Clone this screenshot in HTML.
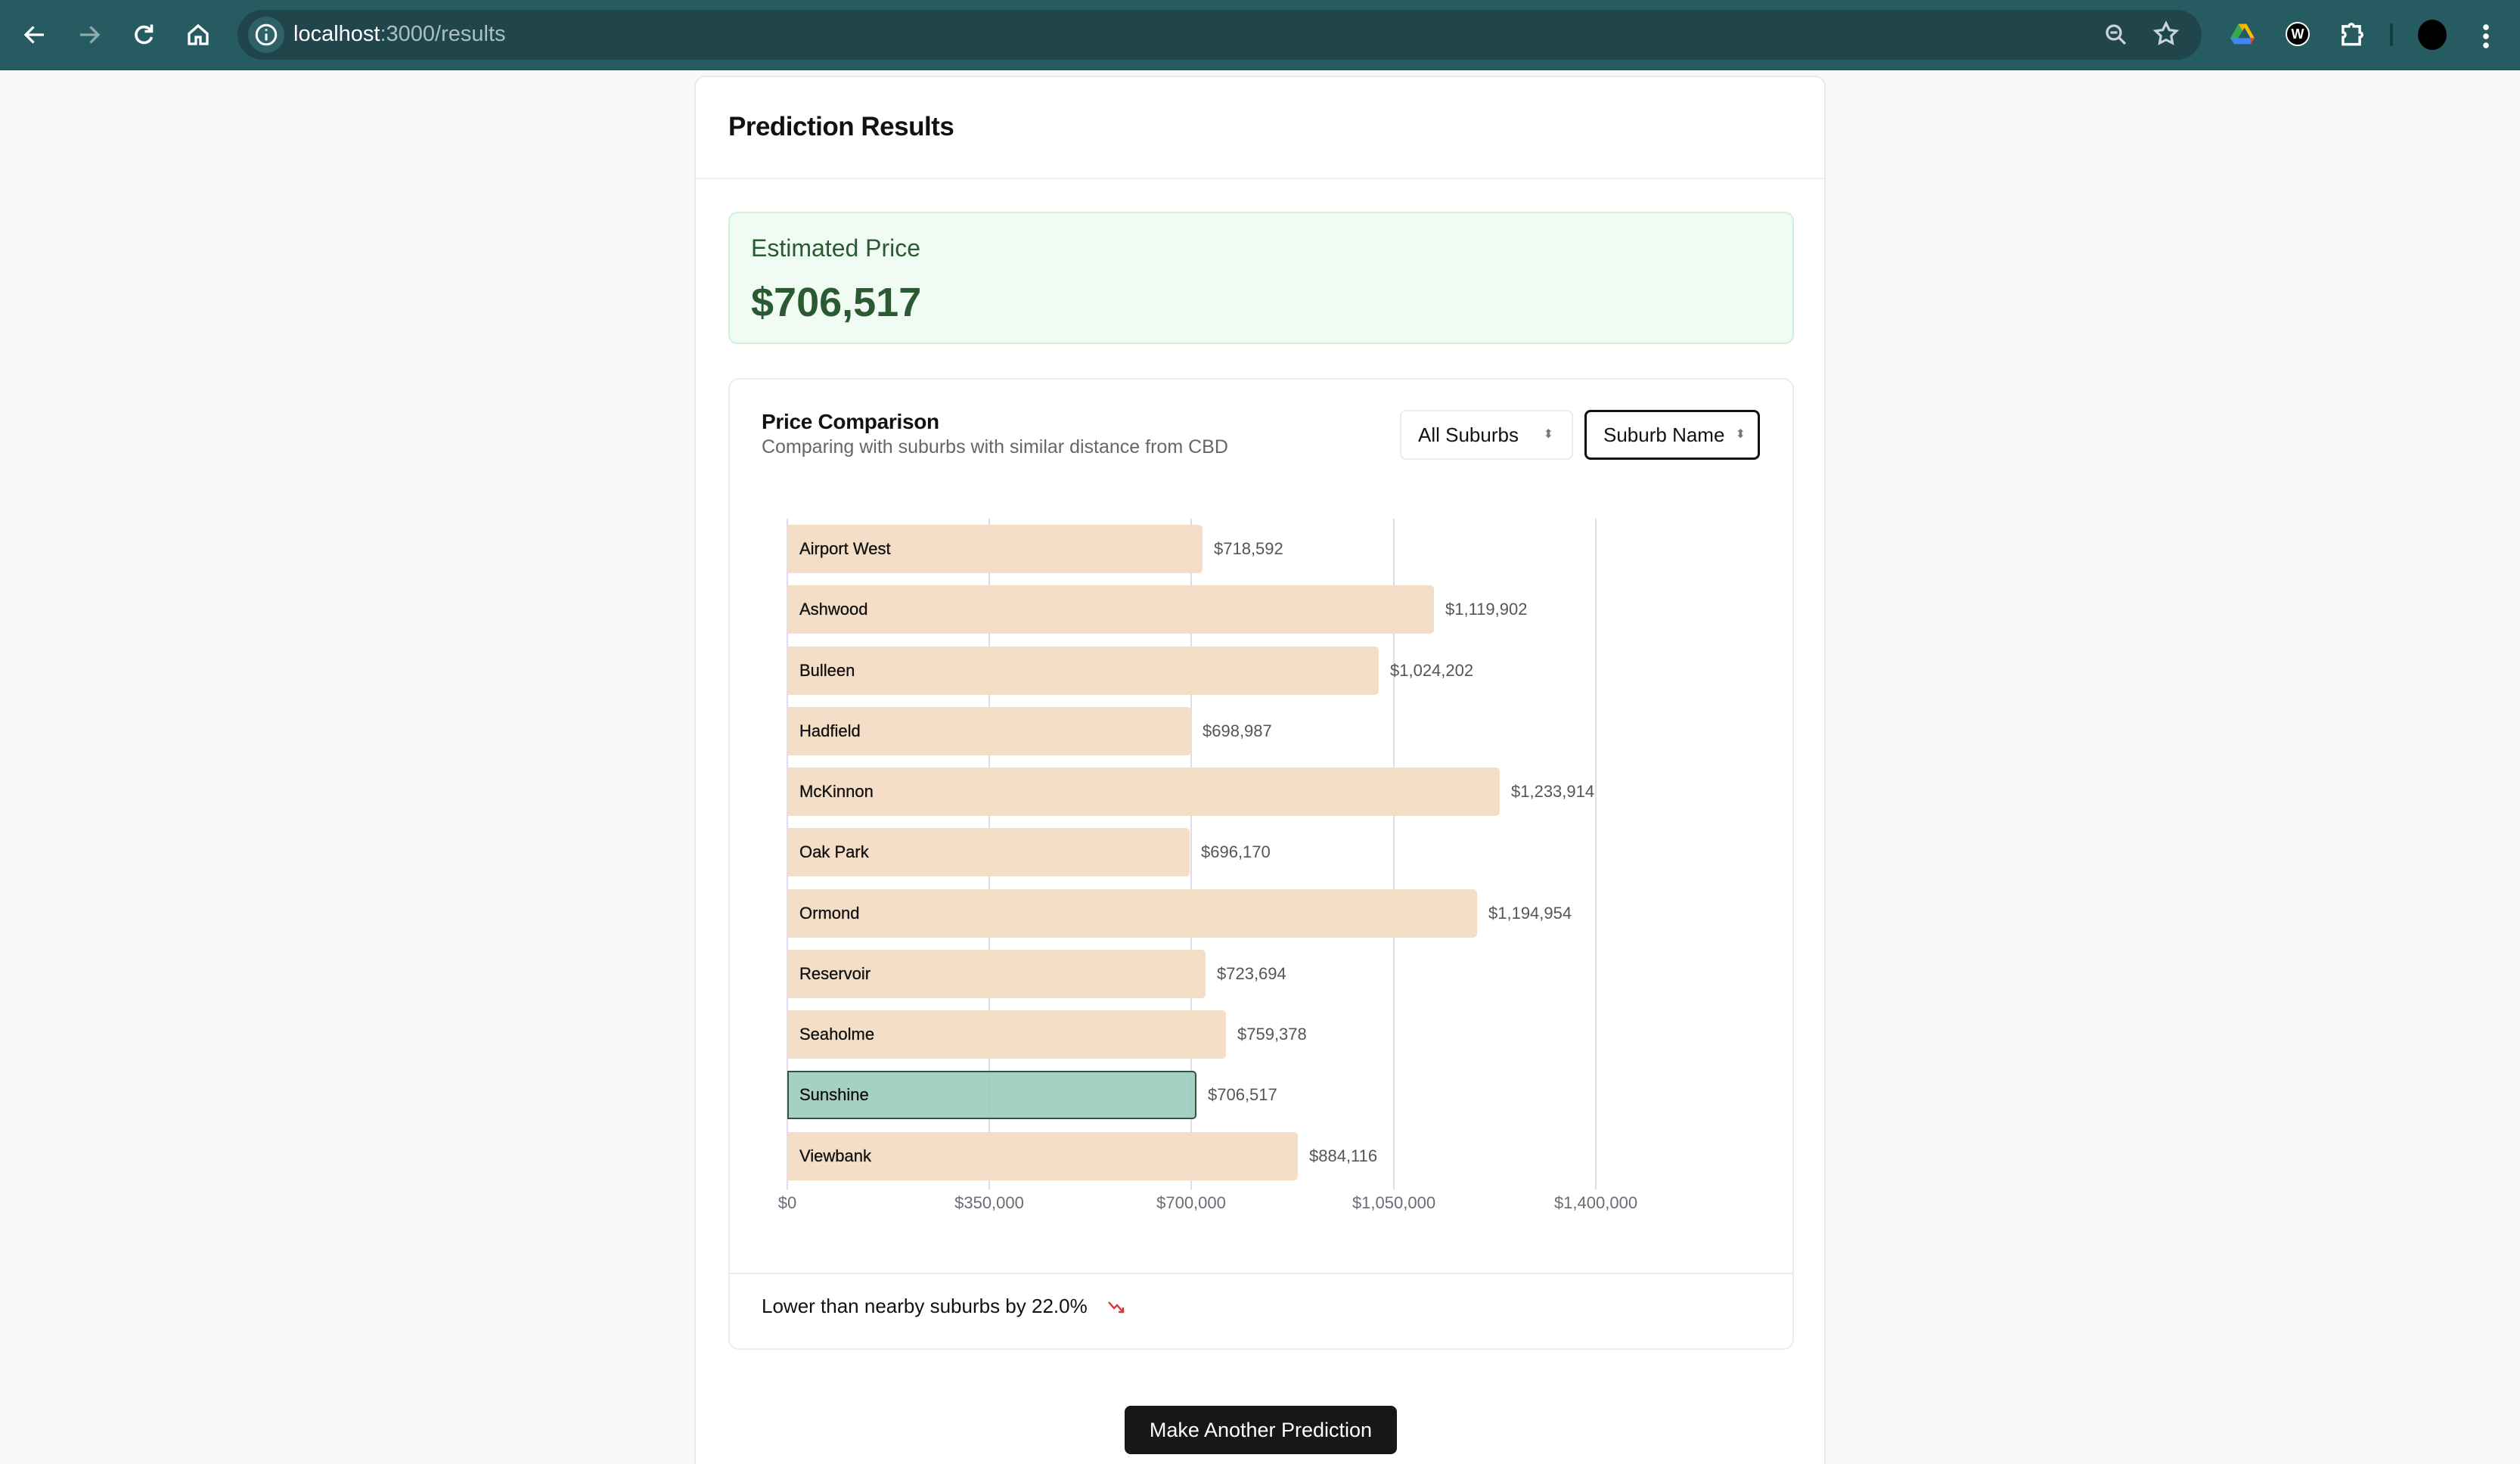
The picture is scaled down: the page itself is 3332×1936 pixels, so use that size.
<!DOCTYPE html>
<html style="width:3332px;height:1936px;overflow:hidden"><head><style>
*{margin:0;padding:0;box-sizing:border-box}
body{width:3332px;height:1936px;background:#f8f9fb;font-family:"Liberation Sans",sans-serif;position:relative;overflow:hidden}
.a{position:absolute}
.top{left:0;top:0;width:3332px;height:93px;background:#265b62}
.pill{left:314px;top:13px;width:2597px;height:66px;border-radius:33px;background:#20464c}
.card{left:918px;top:100px;width:1496px;height:1860px;background:#fff;border:2px solid #e8e9ec;border-radius:14px}
.bar{height:64px;background:#f4dec7;border-radius:0 5px 5px 0}
.lbl{font-size:22px;color:#111;line-height:64px;padding-left:16px;white-space:nowrap;-webkit-text-stroke:0.3px #111}
.val{font-size:22px;color:#555;line-height:64px}
.grid{top:686px;width:2px;height:887px;background:#dedcec}
.ax{top:1578px;font-size:22px;color:#6b6b75;transform:translateX(-50%)}
</style></head><body>
<div class="a top"></div>
<div class="a pill"></div>
<svg class="a" style="left:28px;top:28px" width="36" height="36" viewBox="0 0 24 24" fill="none" stroke="#fff" stroke-width="2.2"><path d="M20 12H5M11 5l-7 7 7 7"/></svg>
<svg class="a" style="left:100px;top:28px" width="36" height="36" viewBox="0 0 24 24" fill="none" stroke="#8fa9ac" stroke-width="2.2"><path d="M4 12h15M13 5l7 7-7 7"/></svg>
<svg class="a" style="left:172px;top:28px" width="36" height="36" viewBox="0 0 24 24" fill="none" stroke="#fff" stroke-width="2.4"><path d="M18 8a7 7 0 1 0 1 6"/><path d="M19 3v6h-6"/></svg>
<svg class="a" style="left:244px;top:28px" width="36" height="36" viewBox="0 0 24 24" fill="none" stroke="#fff" stroke-width="2.2"><path d="M4 11l8-7 8 7v9h-6v-6h-4v6H4z"/></svg>
<div class="a" style="left:328px;top:22px;width:48px;height:48px;border-radius:24px;background:#2f6168"></div>
<svg class="a" style="left:334px;top:28px" width="36" height="36" viewBox="0 0 24 24" fill="none" stroke="#fff" stroke-width="2"><circle cx="12" cy="12" r="8.5"/><path d="M12 11v6M12 7v1.5"/></svg>
<div class="a" style="left:388px;top:29px;font-size:29px;color:#fff">localhost<span style="color:#a9bfc1">:3000/results</span></div>
<svg class="a" style="left:2780px;top:28px" width="36" height="36" viewBox="0 0 24 24" fill="none" stroke="#c7d3d4" stroke-width="2.2"><circle cx="10" cy="10" r="6"/><path d="M7 10h6M14.5 14.5L20 20"/></svg>
<svg class="a" style="left:2845px;top:26px" width="38" height="38" viewBox="0 0 24 24" fill="none" stroke="#c7d3d4" stroke-width="2"><path d="M12 3l2.7 5.6 6 .8-4.4 4.2 1.1 6L12 16.8 6.6 19.6l1.1-6L3.3 9.4l6-.8z"/></svg>
<svg class="a" style="left:2949px;top:30px" width="32" height="30" viewBox="0 0 24 22"><path d="M8 1h8l-4 7z" fill="#f4b400"/><path d="M8 1L0 15l4 6 8-13z" fill="#34a853"/><path d="M16 1l8 14-4 0-8-14z" fill="#fbbc04"/><path d="M4 21h16l4-6H0z" fill="#4285f4"/><path d="M20 21l4-6h-4z" fill="#ea4335"/></svg>
<div class="a" style="left:3022px;top:29px;width:32px;height:32px;border-radius:16px;background:#000;border:2px solid #fff;color:#fff;font-size:18px;font-weight:bold;text-align:center;line-height:28px">W</div>
<svg class="a" style="left:3090px;top:27px" width="38" height="38" viewBox="0 0 24 24" fill="none" stroke="#fff" stroke-width="2.2"><path d="M5 5h5a2 2 0 0 1 4 0h5v5a2 2 0 0 1 0 4v6H5v-6a2 2 0 0 0 0-4z"/></svg>
<div class="a" style="left:3160px;top:31px;width:4px;height:30px;background:#173c40;border-radius:2px"></div>
<div class="a" style="left:3197px;top:26px;width:38px;height:40px;border-radius:50%;background:#000"></div>
<div class="a" style="left:3283px;top:30px;width:8px;height:34px;background:radial-gradient(circle,#fff 3.5px,transparent 4px) 0 0/8px 12px repeat-y"></div>

<div class="a card"></div>
<div class="a" style="left:963px;top:148px;font-size:35px;font-weight:bold;color:#111;letter-spacing:-0.5px">Prediction Results</div>
<div class="a" style="left:920px;top:235px;width:1492px;height:2px;background:#f0f1f3"></div>
<div class="a" style="left:963px;top:280px;width:1409px;height:175px;background:#f0fcf3;border:2px solid #cdf2d8;border-radius:12px"></div>
<div class="a" style="left:993px;top:310px;font-size:32px;color:#2b5a32">Estimated Price</div>
<div class="a" style="left:993px;top:369px;font-size:54px;font-weight:bold;color:#2b5a32">$706,517</div>

<div class="a" style="left:963px;top:500px;width:1409px;height:1285px;background:#fff;border:2px solid #ebecef;border-radius:14px"></div>
<div class="a" style="left:1007px;top:542px;font-size:28px;font-weight:bold;color:#111;letter-spacing:-0.3px">Price Comparison</div>
<div class="a" style="left:1007px;top:577px;font-size:25px;color:#666">Comparing with suburbs with similar distance from CBD</div>
<div class="a" style="left:1851px;top:542px;width:229px;height:66px;border:2px solid #ebecef;border-radius:8px;font-size:26px;line-height:62px;padding-left:22px;color:#111">All Suburbs<span style="position:absolute;right:24px;font-size:16px;color:#777">⬍</span></div>
<div class="a" style="left:2095px;top:542px;width:232px;height:66px;border:3px solid #111;border-radius:8px;font-size:26px;line-height:60px;padding-left:22px;color:#111">Suburb Name<span style="position:absolute;right:16px;font-size:16px;color:#777">⬍</span></div>

<div class="a grid" style="left:1040px"></div>
<div class="a grid" style="left:1307px"></div>
<div class="a grid" style="left:1574px"></div>
<div class="a grid" style="left:1842px"></div>
<div class="a grid" style="left:2109px"></div>

<div class="a bar" style="left:1041px;top:694px;width:549px"></div><div class="a lbl" style="left:1041px;top:694px">Airport West</div><div class="a val" style="left:1605px;top:694px">$718,592</div>
<div class="a bar" style="left:1041px;top:774px;width:855px"></div><div class="a lbl" style="left:1041px;top:774px">Ashwood</div><div class="a val" style="left:1911px;top:774px">$1,119,902</div>
<div class="a bar" style="left:1041px;top:855px;width:782px"></div><div class="a lbl" style="left:1041px;top:855px">Bulleen</div><div class="a val" style="left:1838px;top:855px">$1,024,202</div>
<div class="a bar" style="left:1041px;top:935px;width:534px"></div><div class="a lbl" style="left:1041px;top:935px">Hadfield</div><div class="a val" style="left:1590px;top:935px">$698,987</div>
<div class="a bar" style="left:1041px;top:1015px;width:942px"></div><div class="a lbl" style="left:1041px;top:1015px">McKinnon</div><div class="a val" style="left:1998px;top:1015px">$1,233,914</div>
<div class="a bar" style="left:1041px;top:1095px;width:532px"></div><div class="a lbl" style="left:1041px;top:1095px">Oak Park</div><div class="a val" style="left:1588px;top:1095px">$696,170</div>
<div class="a bar" style="left:1041px;top:1176px;width:912px"></div><div class="a lbl" style="left:1041px;top:1176px">Ormond</div><div class="a val" style="left:1968px;top:1176px">$1,194,954</div>
<div class="a bar" style="left:1041px;top:1256px;width:553px"></div><div class="a lbl" style="left:1041px;top:1256px">Reservoir</div><div class="a val" style="left:1609px;top:1256px">$723,694</div>
<div class="a bar" style="left:1041px;top:1336px;width:580px"></div><div class="a lbl" style="left:1041px;top:1336px">Seaholme</div><div class="a val" style="left:1636px;top:1336px">$759,378</div>
<div class="a bar" style="left:1041px;top:1416px;width:541px;background:rgba(155,201,189,.88);border:2px solid #2b5a3a;border-radius:0 5px 5px 0"></div><div class="a lbl" style="left:1041px;top:1416px">Sunshine</div><div class="a val" style="left:1597px;top:1416px">$706,517</div>
<div class="a bar" style="left:1041px;top:1497px;width:675px"></div><div class="a lbl" style="left:1041px;top:1497px">Viewbank</div><div class="a val" style="left:1731px;top:1497px">$884,116</div>

<div class="a ax" style="left:1041px">$0</div>
<div class="a ax" style="left:1308px">$350,000</div>
<div class="a ax" style="left:1575px">$700,000</div>
<div class="a ax" style="left:1843px">$1,050,000</div>
<div class="a ax" style="left:2110px">$1,400,000</div>

<div class="a" style="left:965px;top:1683px;width:1405px;height:2px;background:#ebecef"></div>
<div class="a" style="left:1007px;top:1712px;font-size:26px;color:#111">Lower than nearby suburbs by 22.0%</div>
<svg class="a" style="left:1462px;top:1716px" width="28" height="24" viewBox="0 0 24 24" fill="none" stroke="#d33" stroke-width="2.4"><path d="M2 6l7 8 4-4 8 9M15 19h6v-6"/></svg>

<div class="a" style="left:1487px;top:1859px;width:360px;height:64px;background:#17171a;border-radius:8px;color:#fff;font-size:27px;text-align:center;line-height:64px">Make Another Prediction</div>
</body></html>
